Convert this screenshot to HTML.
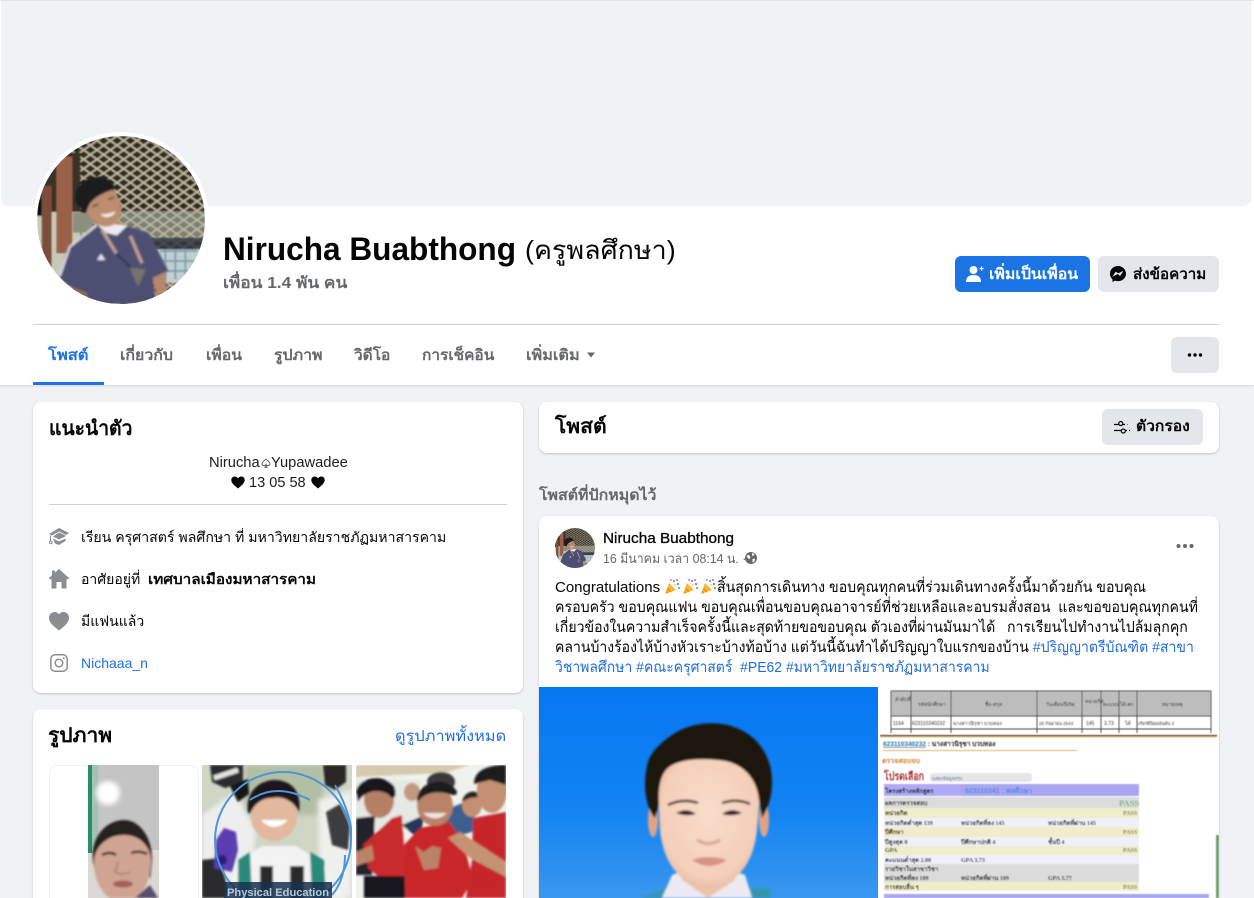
<!DOCTYPE html>
<html lang="th"><head><meta charset="utf-8"><title>Nirucha Buabthong</title>
<style>
html,body{margin:0;padding:0;width:1254px;height:898px;overflow:hidden;background:#f0f2f5}
body{position:relative;font-family:"Liberation Sans","Noto Sans CJK SC",sans-serif;color:#050505;font-size:15px}
.a{position:absolute;white-space:pre;line-height:20px;transform-origin:0 50%}
.b{font-weight:700}
.g{color:#65676b}
.l{color:#216fdb}
.card{position:absolute;background:#fff;border-radius:8px;box-shadow:0 1px 2px rgba(0,0,0,.2)}
.btn{position:absolute;border-radius:6px;background:#e4e6eb}
svg{position:absolute;display:block;overflow:hidden}
</style></head><body>
<svg width="0" height="0" style="left:0;top:0">
<defs>
<filter id="b1"><feGaussianBlur stdDeviation="1.300"/></filter>
<filter id="b2"><feGaussianBlur stdDeviation="2.500"/></filter>
<filter id="b3"><feGaussianBlur stdDeviation="3.500"/></filter>
<filter id="b05"><feGaussianBlur stdDeviation=".55"/></filter>
<filter id="b07"><feGaussianBlur stdDeviation="1"/></filter>
<pattern id="fence" width="40" height="28" patternUnits="userSpaceOnUse">
<rect width="40" height="28" fill="#2f2b22"/>
<path d="M0 0L40 28M40 0L0 28" stroke="#c9c0a6" stroke-width="5"/>
</pattern>
<clipPath id="cv"><circle cx="252" cy="252" r="252"/></clipPath>
<symbol id="av" viewBox="0 0 504 504">
<g clip-path="url(#cv)"><g filter="url(#b2)">
<rect width="504" height="504" fill="url(#fence)"/>
<rect x="230" y="225" width="274" height="90" fill="#b4b6a6" opacity=".6"/>
<rect x="340" y="305" width="164" height="40" fill="#363c42" opacity=".85"/>
<rect x="350" y="340" width="154" height="100" fill="#c2cfcf"/>
<path d="M370 345H480M365 375H480M365 405H470M385 340V430M415 340V430M445 340V430" stroke="#7fa3b4" stroke-width="6"/>
<rect x="0" y="50" width="130" height="180" fill="#3a3228"/>
<rect x="0" y="228" width="130" height="230" fill="#c9c9b8"/>
<rect x="0" y="190" width="14" height="50" fill="#101010"/>
<rect x="14" y="150" width="30" height="245" fill="#7d4e3b"/>
<rect x="58" y="62" width="48" height="290" fill="#9b604a"/>
<rect x="108" y="230" width="60" height="60" fill="#8d8f7e"/>
</g><g filter="url(#b3)">
<path d="M170 250L268 262 272 300 190 300Z" fill="#b88a6d"/>
<path d="M66 420L90 338 175 268 272 270 336 292 394 405 348 425 356 504H145L140 472 82 442Z" fill="#4d4f72"/>
<path d="M68 420L98 332 178 268" fill="none" stroke="#d9d9e4" stroke-width="7"/>
<path d="M178 262L272 268 240 298 205 290Z" fill="#ececf0"/>
<path d="M348 425L385 408 390 470 360 495Z" fill="#b4866a"/>
<path d="M100 452L150 470 152 504 122 482Z" fill="#8d6a52"/>
<path d="M195 282L238 352M280 300L315 382" stroke="#bf9e95" stroke-width="10" fill="none"/>
<path d="M238 352L285 398" stroke="#1a1a20" stroke-width="4"/>
<path d="M278 394L326 400 304 452 290 425Z" fill="#75736d"/>
<path d="M180 372L192 353 205 372Z" fill="#e4e4ec"/>
<ellipse cx="198" cy="208" rx="52" ry="66" fill="#bd8d70" transform="rotate(-22 198 208)"/>
<path d="M114 188C112 150 145 120 190 122C215 124 235 145 234 160C210 165 175 180 158 204 152 215 150 226 146 230 130 220 116 205 114 188Z" fill="#1a1a1e"/>
<path d="M193 236Q215 250 234 228Q215 238 193 236Z" fill="#f3ebe6" stroke="#f3ebe6" stroke-width="4"/>
<path d="M166 212L184 204M214 190L232 184" stroke="#2a201c" stroke-width="4"/>
</g></g>
</symbol>
<symbol id="pop" viewBox="0 0 16 16">
<path d="M0 16L4 5L11 12Z" fill="#f7b731"/><path d="M2.500 10.500L6 14M1.500 13.500L3 15" stroke="#e58a1f" stroke-width="1.400"/>
<circle cx="9" cy="3" r="1.100" fill="#4aa3e0"/><circle cx="13" cy="6" r="1.100" fill="#e0528a"/><circle cx="12" cy="2" r="1" fill="#8a6fd6"/><circle cx="14" cy="10" r="1.100" fill="#5bbf6a"/><circle cx="6" cy="2" r=".9" fill="#e0528a"/><circle cx="10" cy="7" r=".9" fill="#f3c23c"/>
</symbol>
</defs>
</svg>

<!-- header -->
<div style="position:absolute;left:0;top:0;width:1254px;height:385px;background:#fff;box-shadow:0 1px 2px rgba(0,0,0,.12)"></div>
<div style="position:absolute;left:1px;top:0;width:1250px;height:206px;background:#f0f2f5;border-radius:0 0 8px 8px"></div>
<div style="position:absolute;left:0;top:0;width:1254px;height:1px;background:#e3e5e9"></div>
<div style="position:absolute;left:33px;top:132px;width:176px;height:176px;border-radius:50%;background:#fff"></div>
<svg style="left:37px;top:136px" width="168" height="168"><use href="#av" width="168" height="168"/></svg>

<div class="a b" style="left:223px;top:230px;font-size:32px;line-height:38px;transform:scaleX(.987)">Nirucha Buabthong</div>
<div class="a" style="left:525px;top:232px;font-size:26px;line-height:36px;transform:scaleX(1.034)">(ครูพลศึกษา)</div>
<div class="a b g" style="left:223px;top:274px;font-size:16px;transform:scaleX(1.078)">เพื่อน 1.4 พัน คน</div>

<div class="btn" style="left:955px;top:256px;width:135px;height:36px;background:#1b74e4"></div>
<svg style="left:966px;top:265px" width="18" height="18" viewBox="0 0 18 18"><circle cx="7.500" cy="5" r="4" fill="#fff"/><path d="M0 17c0-5 3-7 7.500-7s7.500 2 7.500 7z" fill="#fff"/><path d="M13.500 3.500h4M15.500 1.500v4" stroke="#fff" stroke-width="1.300"/></svg>
<div class="a b" style="left:989px;top:265px;color:#fff;transform:scaleX(1.06)">เพิ่มเป็นเพื่อน</div>
<div class="btn" style="left:1098px;top:256px;width:121px;height:36px"></div>
<svg style="left:1110px;top:266px" width="16" height="16" viewBox="0 0 16 16"><path d="M8 0C3.500 0 0 3.300 0 7.700c0 2.300 1 4.300 2.500 5.700v2.600l2.500-1.400c1 .3 2 .5 3 .5 4.500 0 8-3.300 8-7.400S12.500 0 8 0z" fill="#050505"/><path d="M3.200 10l2.600-4 2.400 1.800L12.800 5.400 10 9.500 7.700 7.700z" fill="#e4e6eb" stroke="#e4e6eb" stroke-width=".6"/></svg>
<div class="a b" style="left:1133px;top:265px;transform:scaleX(1.01)">ส่งข้อความ</div>

<div style="position:absolute;left:33px;top:324px;width:1186px;height:1px;background:#ced0d4"></div>
<div class="a b" style="left:48px;top:346px;color:#1b74e4;transform:scaleX(1.1)">โพสต์</div>
<div class="a b g" style="left:120px;top:346px;transform:scaleX(1.06)">เกี่ยวกับ</div>
<div class="a b g" style="left:206px;top:346px;transform:scaleX(1.05)">เพื่อน</div>
<div class="a b g" style="left:274px;top:346px;transform:scaleX(1.06)">รูปภาพ</div>
<div class="a b g" style="left:354px;top:346px;transform:scaleX(1.03)">วิดีโอ</div>
<div class="a b g" style="left:422px;top:346px;transform:scaleX(1.03)">การเช็คอิน</div>
<div class="a b g" style="left:526px;top:346px;transform:scaleX(1.08)">เพิ่มเติม</div>
<svg style="left:586px;top:352px" width="10" height="6" viewBox="0 0 10 6"><path d="M1 0.500H9L5 5.500Z" fill="#65676b"/></svg>
<div style="position:absolute;left:33px;top:382px;width:71px;height:3px;background:#1b74e4"></div>
<div class="btn" style="left:1171px;top:337px;width:48px;height:36px"></div>
<svg style="left:1187px;top:352px" width="16" height="6" viewBox="0 0 16 6"><circle cx="2.500" cy="3" r="1.700" fill="#050505"/><circle cx="8" cy="3" r="1.700" fill="#050505"/><circle cx="13.500" cy="3" r="1.700" fill="#050505"/></svg>

<!-- intro -->
<div class="card" style="left:33px;top:402px;width:490px;height:291px"></div>
<div class="a b" style="left:49px;top:417px;font-size:20px;line-height:24px;transform:scaleX(.965)">แนะนำตัว</div>
<div class="a" style="left:209px;top:453px;font-size:15px;color:#1c1e21;transform:scaleX(.98)">Nirucha</div>
<svg style="left:261px;top:458px" width="10" height="11" viewBox="0 0 10 11"><path d="M5 1C3 3 1 4 1 6c0 1.500 2 2 3.500 1L4 9.500h2L5.500 7C7 8 9 7.500 9 6c0-2-2-3-4-5z" fill="none" stroke="#444" stroke-width=".8"/></svg>
<div class="a" style="left:271px;top:453px;font-size:15px;color:#1c1e21;transform:scaleX(.98)">Yupawadee</div>
<svg style="left:231px;top:476px" width="14" height="13" viewBox="0 0 14 13"><path d="M7 12.500C3 9 .3 7 .3 4 .3 1.800 2 .5 3.800 .5 5 .5 6.300 1.200 7 2.500 7.700 1.200 9 .5 10.200 .5 12 .5 13.700 1.800 13.700 4 13.700 7 11 9 7 12.500z" fill="#050505"/></svg>
<div class="a" style="left:249px;top:473px;font-size:15px;color:#1c1e21;transform:scaleX(.97)">13 05 58</div>
<svg style="left:311px;top:476px" width="14" height="13" viewBox="0 0 14 13"><path d="M7 12.500C3 9 .3 7 .3 4 .3 1.800 2 .5 3.800 .5 5 .5 6.300 1.200 7 2.500 7.700 1.200 9 .5 10.200 .5 12 .5 13.700 1.800 13.700 4 13.700 7 11 9 7 12.500z" fill="#050505"/></svg>
<div style="position:absolute;left:49px;top:504px;width:458px;height:1px;background:#ced0d4"></div>

<svg style="left:49px;top:528px" width="20" height="18" viewBox="0 0 20 18"><path d="M10 0L20 5 17 7 10 3.500 3 7.500 0 6Z" fill="#8a8d91"/><path d="M10 4.500L16.500 7.500V8.200L10 11.500 4 8.500Z" fill="#8a8d91"/><path d="M4 10.500L10 13.500 16.500 10.500V13L10 17 6 15.500" fill="#8a8d91"/><path d="M1.500 7.500V13" stroke="#8a8d91"/><circle cx="1.800" cy="14.500" r="1.300" fill="none" stroke="#8a8d91"/></svg>
<div class="a" style="left:81px;top:527px;font-size:14px;transform:scaleX(1.008)">เรียน ครุศาสตร์ พลศึกษา ที่ มหาวิทยาลัยราชภัฏมหาสารคาม</div>
<svg style="left:49px;top:569px" width="20" height="20" viewBox="0 0 20 20"><path d="M10 0L20 9V10H17.500V19.500H12.500V13H7.500V19.500H2.500V10H0V9L3 6.300V1.500H6V3.600Z" fill="#8a8d91"/></svg>
<div class="a" style="left:81px;top:569px;font-size:14px">อาศัยอยู่ที่</div>
<div class="a b" style="left:148px;top:569px;font-size:14px;transform:scaleX(1.09)">เทศบาลเมืองมหาสารคาม</div>
<svg style="left:49px;top:612px" width="20" height="19" viewBox="0 0 20 19"><path d="M10 18.500C4.500 14 0 11 0 5.800 0 2.500 2.500 0 5.500 0 7.500 0 9.200 1 10 2.500 10.800 1 12.500 0 14.500 0 17.500 0 20 2.500 20 5.800 20 11 15.500 14 10 18.500z" fill="#8a8d91"/></svg>
<div class="a" style="left:81px;top:611px;font-size:14px">มีแฟนแล้ว</div>
<svg style="left:50px;top:654px" width="18" height="18" viewBox="0 0 18 18"><rect x=".8" y=".8" width="16.400" height="16.400" rx="4.200" fill="none" stroke="#8a8d91" stroke-width="1.500"/><circle cx="9" cy="9" r="3.800" fill="none" stroke="#8a8d91" stroke-width="1.500"/><circle cx="13.800" cy="4.200" r="1" fill="#8a8d91"/></svg>
<div class="a l" style="left:81px;top:653px;font-size:14px">Nichaaa_n</div>

<!-- photos -->
<div class="card" style="left:33px;top:709px;width:490px;height:220px"></div>
<div class="a b" style="left:48px;top:724px;font-size:20px;line-height:24px;transform:scaleX(1.05)">รูปภาพ</div>
<div class="a l" style="left:395px;top:727px;font-size:15px;transform:scaleX(1.088)">ดูรูปภาพทั้งหมด</div>

<svg style="left:49px;top:765px" width="150" height="133" viewBox="49 765 150 133">
<rect x="49" y="765" width="150" height="133" fill="#fff"/>
<rect x="49.500" y="765.500" width="149" height="140" rx="8" fill="none" stroke="#f0f1f3"/>
<rect x="88" y="765" width="71" height="133" fill="#c4c4c4"/>
<rect x="88" y="850" width="71" height="48" fill="#dcd8d4"/>
<rect x="88" y="765" width="4" height="88" fill="#2f8a68"/><rect x="92" y="765" width="6" height="88" fill="#9fc4b4"/>
<g filter="url(#b07)">
<circle cx="108" cy="793" r="12" fill="#fff" filter="url(#b2)"/>
<path d="M93 862C90 835 108 820 124 820C140 820 153 838 152 862L150 880 146 855 100 855 97 880Z" fill="#262223"/>
<path d="M94 860C96 845 108 835 124 835C140 835 150 846 151 860C151 882 140 898 136 898H110C102 894 94 880 94 860Z" fill="#d0a493"/>
<path d="M102 855Q110 851 116 855M131 853Q139 850 147 854" stroke="#3a2a28" stroke-width="2.500" fill="none"/>
<path d="M118 862L115 872Q122 876 130 872" fill="none" stroke="#aa806e" stroke-width="1.500"/>
<ellipse cx="123" cy="884" rx="10" ry="3.500" fill="#a3605a"/>
<path d="M135 898L150 885 158 898Z" fill="#5a4f6c"/>
</g>
</svg>

<svg style="left:202px;top:765px" width="150" height="133" viewBox="202 765 150 133">
<rect x="202" y="765" width="150" height="133" fill="#cfd6c6"/>
<g filter="url(#b2)">
<rect x="245" y="765" width="78" height="50" fill="#b3bfa4"/>
<path d="M202 815L235 792 256 830 248 898H202Z" fill="#eeeeee"/>
<path d="M318 800L352 790V898H320Z" fill="#f0f0ee"/>
</g>
<g filter="url(#b07)">
<path d="M210 765H243V782L225 788 212 782Z" fill="#2a2a2e"/>
<path d="M214 778L238 770" stroke="#e4e4e0" stroke-width="5"/>
<path d="M230 786L248 779 249 794 238 802Z" fill="#121318"/>
<path d="M202 860L220 858 230 898H202Z" fill="#2a2a2e"/>
<path d="M323 765H346V782L335 790 325 785Z" fill="#2a2628"/>
<path d="M326 812L340 804 350 825 348 850 332 845Z" fill="#3c3d40"/>
<path d="M216 840L224 828 236 832 238 850 232 872 214 868Z" fill="#5a3db0"/>
<circle cx="222" cy="860" r="5" fill="#2b1c7a"/>
<path d="M226 898L238 860 262 846H296L322 862 345 898Z" fill="#f3f3f3"/>
<path d="M238 860L250 852 252 898H238ZM310 852L324 860 326 898H312Z" fill="#2c8a7a"/>
<rect x="260" y="866" width="13" height="32" fill="#2a2a2a"/><rect x="290" y="866" width="14" height="32" fill="#2a2a2a"/>
<ellipse cx="274" cy="816" rx="23" ry="25" fill="#e3b89f"/>
<path d="M248 812C245 790 262 780 274 780C292 780 302 792 299 812C293 800 282 796 272 798 262 798 254 804 250 814Z" fill="#1a181a"/>
<path d="M261 820Q274 834 288 820Z" fill="#fff"/>
</g>
<circle cx="283" cy="840" r="68" fill="none" stroke="#4a96dc" stroke-width="2"/>
<path d="M250 800Q276 782 310 800M335 785Q352 815 352 840M345 855Q345 880 332 895" fill="none" stroke="#4a96dc" stroke-width="2"/>
<rect x="224" y="882" width="108" height="16" fill="#17314f" opacity=".85"/>
<text x="227" y="896" font-family="Liberation Sans" font-size="11" font-weight="700" fill="#b6c8dc" textLength="102" lengthAdjust="spacingAndGlyphs">Physical Education</text>
</svg>

<svg style="left:356px;top:765px" width="150" height="133" viewBox="356 765 150 133">
<rect x="356" y="765" width="150" height="133" fill="#f0f2ee"/>
<g filter="url(#b07)">
<path d="M356 765H470L445 773 356 777Z" fill="#d4cbae"/>
<path d="M356 780H420V830H356Z" fill="#e6e8e4"/>
<path d="M440 812L470 800 478 830 445 840Z" fill="#3e5f8e"/>
<path d="M402 825L424 815 420 840Z" fill="#27345a"/>
<ellipse cx="441" cy="782" rx="14" ry="10" fill="#3a383e"/>
<ellipse cx="412" cy="792" rx="8" ry="9" fill="#c29880"/>
<ellipse cx="472" cy="805" rx="10" ry="12" fill="#c2906f"/>
<path d="M462 802C464 790 478 788 482 798 474 796 468 798 462 802Z" fill="#232025"/>
<path d="M356 818L375 816 372 875H356Z" fill="#24242a"/>
<path d="M363 845L392 818 402 815 406 878H380L368 868Z" fill="#c82b2f"/>
<rect x="364" y="876" width="42" height="22" fill="#18181a"/>
<ellipse cx="379" cy="800" rx="15" ry="18" fill="#b58064"/>
<path d="M356 792C358 778 382 772 394 786 398 796 394 802 388 794 376 788 364 792 358 802Z" fill="#18171a"/>
<path d="M356 852L372 845 374 860 356 866Z" fill="#b98467"/>
<path d="M405 898L404 845 420 828 450 822 464 845 473 880 462 898Z" fill="#c9262b"/>
<ellipse cx="435" cy="806" rx="18" ry="20" fill="#b88367"/>
<path d="M417 803C416 786 432 780 444 782 456 786 462 796 452 795 438 790 424 792 417 803Z" fill="#1f1c1e"/>
<path d="M423 813Q435 824 447 813Z" fill="#f1e5de"/>
<path d="M415 846L424 852 432 846 441 848 438 868 424 870Z" fill="#b98368"/>
<path d="M473 818L506 812V898H466L472 860Z" fill="#c6272c"/>
<ellipse cx="492" cy="790" rx="15" ry="23" fill="#c2906f"/>
<path d="M474 784C474 770 488 765 506 765V785L490 780Z" fill="#1c1a1c"/>
<path d="M448 838L460 832 506 862V877L470 858Z" fill="#c59373"/>
</g>
</svg>

<!-- posts header -->
<div class="card" style="left:539px;top:402px;width:680px;height:51px"></div>
<div class="a b" style="left:555px;top:415px;font-size:20px;line-height:24px;transform:scaleX(1.05)">โพสต์</div>
<div class="btn" style="left:1102px;top:409px;width:101px;height:36px"></div>
<svg style="left:1114px;top:420px" width="17" height="15" viewBox="0 0 17 15" fill="none" stroke="#050505" stroke-width="1.200"><path d="M0 4.500H4.500M9 4.500H11M0 10.500H7M11.500 10.500H13M15 10.500H16M13.500 4.500H14"/><circle cx="6.800" cy="3.500" r="2"/><circle cx="9.300" cy="11" r="2"/></svg>
<div class="a b" style="left:1136px;top:417px;transform:scaleX(1.04)">ตัวกรอง</div>
<div class="a b g" style="left:539px;top:486px;font-size:15px;transform:scaleX(1.06)">โพสต์ที่ปักหมุดไว้</div>

<!-- post -->
<div class="card" style="left:539px;top:516px;width:680px;height:420px"></div>
<svg style="left:555px;top:528px" width="40" height="40"><use href="#av" width="40" height="40"/></svg>
<div class="a" style="left:603px;top:529px;font-size:15px;-webkit-text-stroke:.3px #050505;transform:scaleX(1.02)">Nirucha Buabthong</div>
<div class="a g" style="left:603px;top:549px;font-size:13px;transform:scaleX(.95)">16 มีนาคม เวลา 08:14 น. ·</div>
<svg style="left:745px;top:552px" width="12" height="12" viewBox="0 0 12 12"><circle cx="6" cy="6" r="6" fill="#65676b"/><path d="M1.500 3.500L4 3 5.500 5 4.500 7 3 6.500ZM7 1L9.500 2 8.500 4 7 3.500ZM7.500 7L10 6.500 9.500 9.500 7.500 10.500Z" fill="#fff"/></svg>
<svg style="left:1176px;top:543px" width="18" height="6" viewBox="0 0 18 6"><circle cx="2.500" cy="3" r="2" fill="#65676b"/><circle cx="9" cy="3" r="2" fill="#65676b"/><circle cx="15.500" cy="3" r="2" fill="#65676b"/></svg>

<div class="a" style="left:555px;top:578px">Congratulations</div>
<svg style="left:665px;top:578px" width="16" height="16"><use href="#pop" width="16" height="16"/></svg>
<svg style="left:683px;top:578px" width="16" height="16"><use href="#pop" width="16" height="16"/></svg>
<svg style="left:701px;top:578px" width="16" height="16"><use href="#pop" width="16" height="16"/></svg>
<div class="a" style="left:717px;top:578px;transform:scaleX(.943)">สิ้นสุดการเดินทาง ขอบคุณทุกคนที่ร่วมเดินทางครั้งนี้มาด้วยกัน ขอบคุณ</div>
<div class="a" style="left:555px;top:598px;transform:scaleX(.944)">ครอบครัว ขอบคุณแฟน ขอบคุณเพื่อนขอบคุณอาจารย์ที่ช่วยเหลือและอบรมสั่งสอน  และขอขอบคุณทุกคนที่</div>
<div class="a" style="left:555px;top:618px;transform:scaleX(.938)">เกี่ยวข้องในความสำเร็จครั้งนี้และสุดท้ายขอขอบคุณ ตัวเองที่ผ่านมันมาได้   การเรียนไปทำงานไปล้มลุกคุก</div>
<div class="a" style="left:555px;top:638px;transform:scaleX(.936)">คลานบ้างร้องไห้บ้างหัวเราะบ้างท้อบ้าง แต่วันนี้ฉันทำได้ปริญญาใบแรกของบ้าน <span class="l">#ปริญญาตรีบัณฑิต #สาขา</span></div>
<div class="a l" style="left:555px;top:658px;transform:scaleX(.931)">วิชาพลศึกษา #คณะครุศาสตร์  #PE62 #มหาวิทยาลัยราชภัฏมหาสารคาม</div>

<!-- blue portrait -->
<svg style="left:539px;top:687px" width="339" height="211" viewBox="539 687 339 211">
<defs><linearGradient id="sky" x1="0" y1="0" x2="0" y2="1"><stop offset="0" stop-color="#0577f2"/><stop offset=".6" stop-color="#1484f2"/><stop offset="1" stop-color="#3a97ee"/></linearGradient>
<radialGradient id="skin" cx=".5" cy=".45" r=".62"><stop offset="0" stop-color="#f9dccb"/><stop offset=".75" stop-color="#f4cfba"/><stop offset="1" stop-color="#e3b09a"/></radialGradient></defs>
<rect x="539" y="687" width="339" height="211" fill="url(#sky)"/>
<g filter="url(#b07)">
<path d="M640 898L665 888 770 888 770 898Z" fill="#3596b4"/>
<path d="M662 898L672 875 690 868H726L745 875 752 898Z" fill="#eceaf2"/>
<path d="M680 860H738L735 880 708 898 682 880Z" fill="#eec3ad"/>
<ellipse cx="653" cy="820" rx="5" ry="17" fill="#dfa487"/>
<ellipse cx="764" cy="820" rx="5" ry="17" fill="#dfa487"/>
<path d="M658 790C658 765 680 752 708 752C738 752 760 765 760 795L757 830C755 848 750 862 740 873C729 884 718 889 708 889C698 889 687 884 677 873C667 862 662 848 660 830Z" fill="url(#skin)"/>
<path d="M655 818C644 805 643 780 648 762C652 750 662 742 672 735C686 725 705 722 722 724C748 728 766 745 771 770C774 790 770 805 762 818L759 800C757 780 745 765 725 761C705 758 680 758 668 768C660 775 658 790 659 805Z" fill="#1d1311"/>
<path d="M668 805Q683 798 698 803M722 803Q737 798 750 804" stroke="#3a2a26" stroke-width="2.500" fill="none"/>
<path d="M676 813Q687 807 696 814Q686 817 676 813ZM722 814Q731 807 742 813Q732 817 722 814Z" fill="#33231f"/>
<path d="M697 840Q708 847 720 840" stroke="#dca58c" stroke-width="3" fill="none"/>
<path d="M692 860Q708 854 727 860Q710 872 692 860Z" fill="#d99286"/>
</g>
</svg>

<!-- table image -->
<svg style="left:880px;top:687px" width="339" height="211" viewBox="880 687 339 211" font-family="Liberation Sans,serif">
<rect x="880" y="687" width="339" height="211" fill="#fff"/>
<g filter="url(#b05)">
<rect x="891" y="691" width="320" height="25" fill="#bdbdbd"/>
<path d="M891 691H1211M891 716H1211M891 729H1211M891 691V733M911 691V733M951 691V733M1037 691V733M1082 691V733M1101 691V733M1119 691V733M1137 691V733M1211 691V733" stroke="#444" stroke-width=".9" fill="none"/>
<text x="895" y="701" font-size="5" fill="#222">ลำดับที่</text><text x="918" y="706" font-size="5" fill="#222">รหัสนักศึกษา</text><text x="985" y="706" font-size="5" fill="#222">ชื่อ-สกุล</text><text x="1046" y="706" font-size="5" fill="#222">วันเดือนปีเกิด</text><text x="1085" y="703" font-size="5" fill="#222">หน่วยกิต</text><text x="1103" y="706" font-size="5" fill="#222">คะแนน</text><text x="1120" y="706" font-size="5" fill="#222">ได้-ตก</text><text x="1162" y="706" font-size="5" fill="#222">หมายเหตุ</text>
<text x="893" y="725" font-size="5" fill="#333">1164</text><text x="912" y="725" font-size="5" fill="#333">623110340232</text><text x="953" y="725" font-size="5" fill="#333">นางสาวนิรุชา บวบทอง</text><text x="1039" y="725" font-size="4.500" fill="#333">26 กันยายน 2543</text><text x="1086" y="725" font-size="5" fill="#333">145</text><text x="1104" y="725" font-size="5" fill="#333">3.73</text><text x="1125" y="725" font-size="5" fill="#333">ได้</text><text x="1138" y="725" font-size="4.500" fill="#333">เกียรตินิยมอันดับ 2</text>
<rect x="880" y="735" width="337" height="1.300" fill="#3a3320"/><rect x="880" y="736.300" width="337" height="1" fill="#e0b85c"/>
<text x="883" y="746" font-size="6.500" font-weight="700" fill="#222"><tspan fill="#2a6fa0" text-decoration="underline">623110340232</tspan> : นางสาวนิรุชา บวบทอง</text>
<rect x="883" y="750" width="194" height="1" fill="#e0b070"/>
<text x="882" y="763" font-size="7" font-weight="700" fill="#cf7f2e">ตรวจสอบจบ</text>
<text x="884" y="780" font-size="11" font-weight="700" fill="#a83030" textLength="40" lengthAdjust="spacingAndGlyphs">โปรดเลือก</text>
<rect x="930" y="773" width="102" height="9" rx="3" fill="#e6e6e6"/><text x="932" y="780" font-size="4.500" fill="#46a">แสดงข้อมูลสรุป</text>
<rect x="884" y="784" width="255" height="12" fill="#b0aaf6"/>
<rect x="960" y="784" width="179" height="12" rx="5" fill="#a9a6f2"/>
<text x="885" y="793" font-size="6" font-weight="700" fill="#111">โครงสร้างหลักสูตร</text>
<text x="965" y="793" font-size="7" font-weight="700" fill="#4f8fe0">623110341 : พลศึกษา</text>
<rect x="884" y="797" width="255" height="11" fill="#dcdcdc"/>
<text x="885" y="805" font-size="6" font-weight="700" fill="#222">ผลการตรวจสอบ</text>
<text x="1119" y="806" font-size="8.500" font-weight="700" fill="#6fb487" font-family="Liberation Serif">PASS</text>
<rect x="884" y="808" width="255" height="10" fill="#eeeecb"/>
<rect x="884" y="818" width="255" height="9" fill="#f0f0fb"/>
<rect x="884" y="827" width="255" height="10" fill="#eeeecb"/>
<rect x="884" y="837" width="255" height="9" fill="#f0f0fb"/>
<rect x="884" y="846" width="255" height="9" fill="#eeeecb"/>
<rect x="884" y="855" width="255" height="9" fill="#f0f0fb"/>
<rect x="884" y="864" width="255" height="9" fill="#dcdcdc"/>
<rect x="884" y="873" width="255" height="9" fill="#dcdcdc"/>
<rect x="884" y="882" width="255" height="9" fill="#eeeecb"/>
<g font-size="6" font-weight="700" fill="#222" font-family="Liberation Serif">
<text x="885" y="815">หน่วยกิต</text>
<text x="885" y="825">หน่วยกิตต่ำสุด 139</text><text x="961" y="825">หน่วยกิตที่ลง 145</text><text x="1048" y="825">หน่วยกิตที่ผ่าน 145</text>
<text x="885" y="834">ปีศึกษา</text>
<text x="885" y="844">ปีสูงสุด 8</text><text x="961" y="844">ปีศึกษาปกติ 4</text><text x="1048" y="844">ชั้นปี 4</text>
<text x="885" y="852">GPA</text>
<text x="885" y="862">คะแนนต่ำสุด 2.00</text><text x="961" y="862">GPA 3.73</text>
<text x="885" y="871">รายวิชาในสาขาวิชา</text>
<text x="885" y="880">หน่วยกิตที่ลง 109</text><text x="961" y="880">หน่วยกิตที่ผ่าน 109</text><text x="1048" y="880">GPA 3.77</text>
<text x="885" y="889">การสอบอื่น ๆ</text>
<g fill="#7a7a40"><text x="1123" y="815">PASS</text><text x="1123" y="834">PASS</text><text x="1123" y="852">PASS</text><text x="1123" y="889">PASS</text></g>
</g>
<rect x="884" y="894" width="325" height="4" fill="#a9a6f2"/>
<rect x="1216" y="835" width="3" height="63" fill="#6d9d6d"/>
</g>
</svg>
</body></html>
